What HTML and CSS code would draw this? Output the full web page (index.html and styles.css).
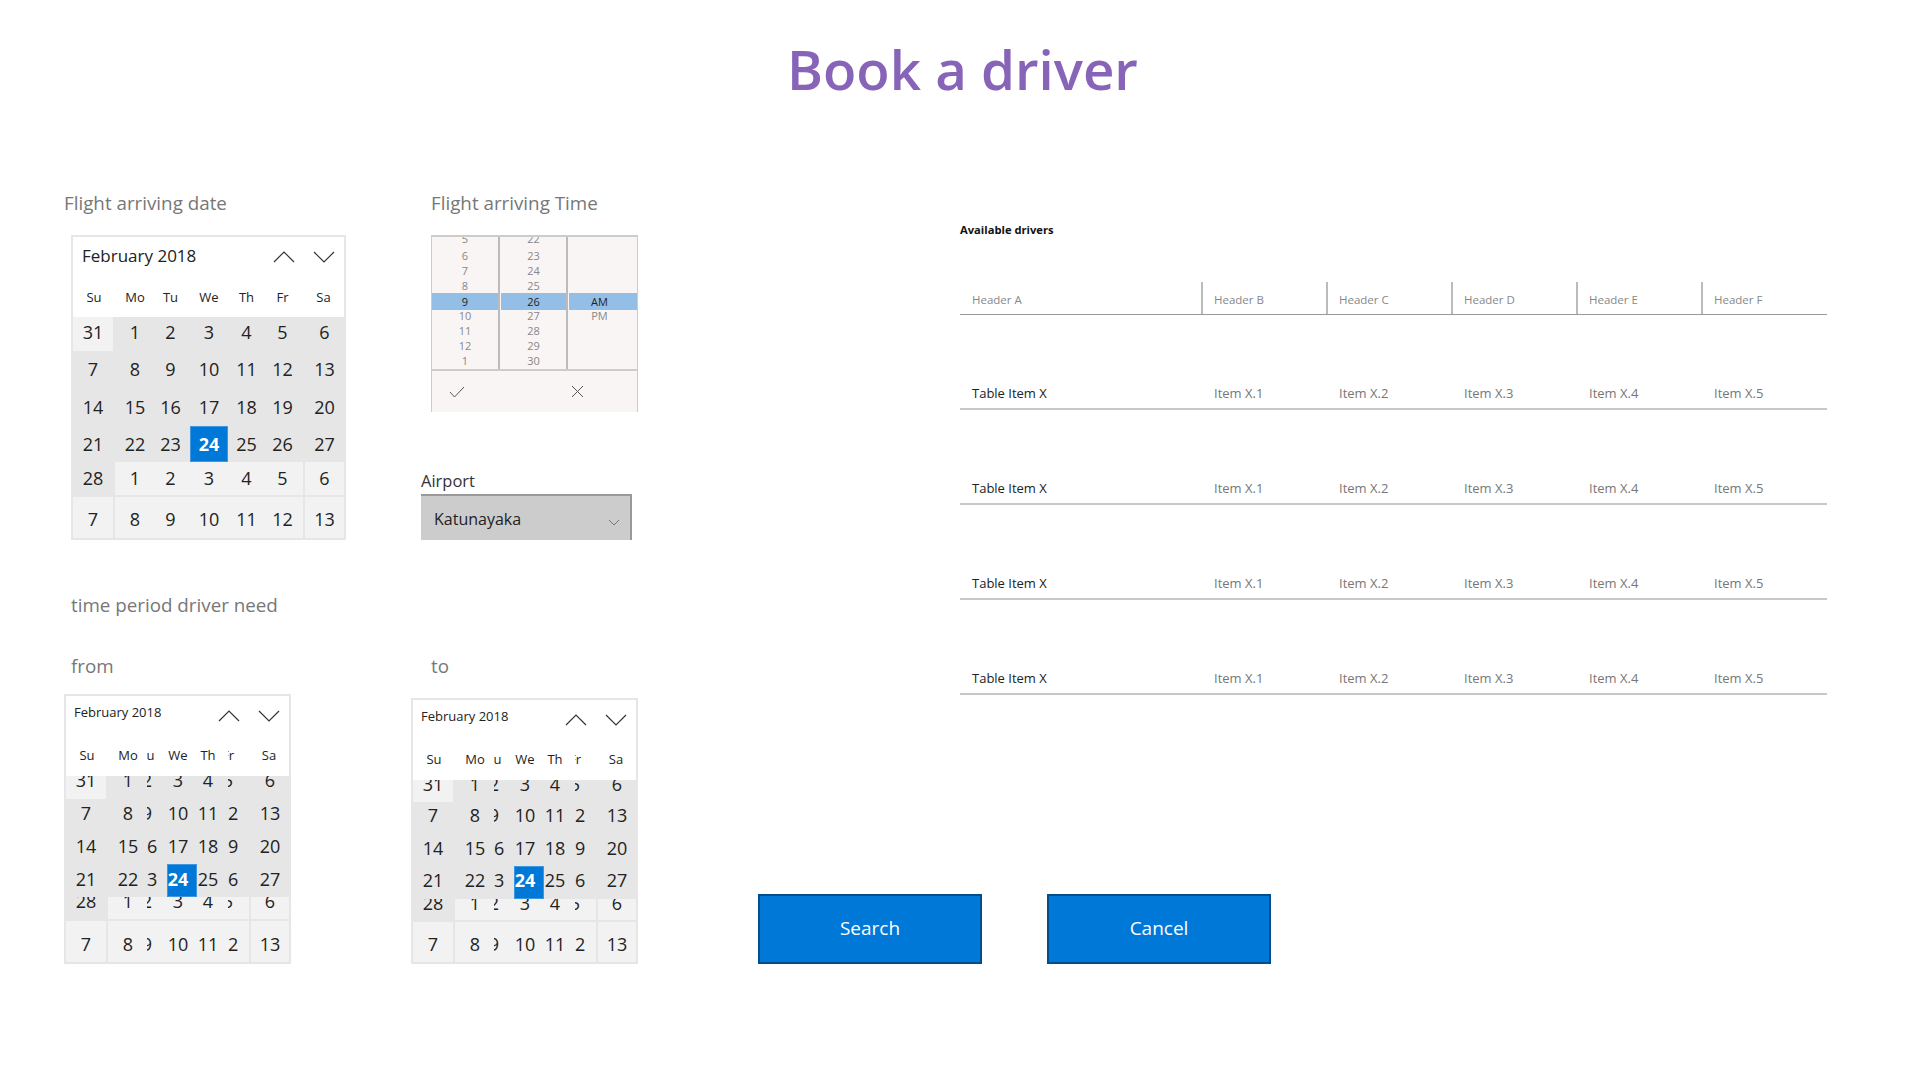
FILE: index.html
```html
<!DOCTYPE html>
<html lang="en">
<head>
  <meta charset="UTF-8" />
  <title>Book a driver</title>
  <link rel="stylesheet" href="styles.css">
</head>
<body>

  <h1 class="page-title">Book a driver</h1>

  <div class="main">

    <!-- Left side: date and time pickers -->
    <div class="forms">
      <div class="forms-top">
        <div class="col-date">
          <div class="label">Flight arriving date</div>
          <div class="cal cal-big">
            <div class="cal-head">
              <span class="cal-month">February 2018</span>
              <svg class="chev" width="22" height="12" viewBox="0 0 22 12"><path d="M1 11 L11 1 L21 11"/></svg>
              <svg class="chev" width="22" height="12" viewBox="0 0 22 12"><path d="M1 1 L11 11 L21 1"/></svg>
            </div>
            <div class="cal-week"><span>Su</span><span>Mo</span><span>Tu</span><span>We</span><span>Th</span><span>Fr</span><span>Sa</span></div>
            <div class="cal-days">
              <span>31</span><span>1</span><span>2</span><span>3</span><span>4</span><span>5</span><span>6</span>
              <span>7</span><span>8</span><span>9</span><span>10</span><span>11</span><span>12</span><span>13</span>
              <span>14</span><span>15</span><span>16</span><span>17</span><span>18</span><span>19</span><span>20</span>
              <span>21</span><span>22</span><span>23</span><span class="today">24</span><span>25</span><span>26</span><span>27</span>
              <span>28</span><span>1</span><span>2</span><span>3</span><span>4</span><span>5</span><span>6</span>
              <span>7</span><span>8</span><span>9</span><span>10</span><span>11</span><span>12</span><span>13</span>
            </div>
          </div>
        </div>

        <div class="col-time">
          <div class="label">Flight arriving Time</div>
          <div class="time-picker">
            <div class="time-cols">
              <div class="time-col">
                <div class="first">5</div><div>6</div><div>7</div><div>8</div><div class="sel">9</div><div class="next">10</div><div>11</div><div>12</div><div>1</div>
              </div>
              <div class="time-col">
                <div class="first">22</div><div>23</div><div>24</div><div>25</div><div class="sel">26</div><div class="next">27</div><div>28</div><div>29</div><div>30</div>
              </div>
              <div class="time-col time-col-ampm">
                <div class="sel">AM</div><div class="next">PM</div>
              </div>
            </div>
            <div class="time-actions">
              <svg width="16" height="12" viewBox="0 0 16 12"><path d="M1 6 L5.5 11 L15 1"/></svg>
              <svg width="13" height="13" viewBox="0 0 13 13"><path d="M1 1 L12 12 M12 1 L1 12"/></svg>
            </div>
          </div>
          <div class="field-label">Airport</div>
          <div class="select">
            <span>Katunayaka</span>
            <svg width="12" height="7" viewBox="0 0 12 7"><path d="M1 1 L6 6 L11 1"/></svg>
          </div>
        </div>
      </div>

      <div class="label period-title">time period driver need</div>

      <div class="forms-bottom">
        <div class="col-from">
          <div class="label">from</div>
          <div class="cal cal-sm cal-from">
            <div class="cal-head">
              <span class="cal-month">February 2018</span>
              <svg class="chev" width="22" height="12" viewBox="0 0 22 12"><path d="M1 11 L11 1 L21 11"/></svg>
              <svg class="chev" width="22" height="12" viewBox="0 0 22 12"><path d="M1 1 L11 11 L21 1"/></svg>
            </div>
            <div class="cal-week"><span>Su</span><span>Mo</span><span>Tu</span><span>We</span><span>Th</span><span>Fr</span><span>Sa</span></div>
            <div class="cal-days">
              <span>31</span><span>1</span><span>2</span><span>3</span><span>4</span><span>5</span><span>6</span>
              <span>7</span><span>8</span><span>9</span><span>10</span><span>11</span><span>12</span><span>13</span>
              <span>14</span><span>15</span><span>16</span><span>17</span><span>18</span><span>19</span><span>20</span>
              <span>21</span><span>22</span><span>23</span><span class="today">24</span><span>25</span><span>26</span><span>27</span>
              <span>28</span><span>1</span><span>2</span><span>3</span><span>4</span><span>5</span><span>6</span>
              <span>7</span><span>8</span><span>9</span><span>10</span><span>11</span><span>12</span><span>13</span>
            </div>
          </div>
        </div>

        <div class="col-to">
          <div class="label">to</div>
          <div class="cal cal-sm cal-to">
            <div class="cal-head">
              <span class="cal-month">February 2018</span>
              <svg class="chev" width="22" height="12" viewBox="0 0 22 12"><path d="M1 11 L11 1 L21 11"/></svg>
              <svg class="chev" width="22" height="12" viewBox="0 0 22 12"><path d="M1 1 L11 11 L21 1"/></svg>
            </div>
            <div class="cal-week"><span>Su</span><span>Mo</span><span>Tu</span><span>We</span><span>Th</span><span>Fr</span><span>Sa</span></div>
            <div class="cal-days">
              <span>31</span><span>1</span><span>2</span><span>3</span><span>4</span><span>5</span><span>6</span>
              <span>7</span><span>8</span><span>9</span><span>10</span><span>11</span><span>12</span><span>13</span>
              <span>14</span><span>15</span><span>16</span><span>17</span><span>18</span><span>19</span><span>20</span>
              <span>21</span><span>22</span><span>23</span><span class="today">24</span><span>25</span><span>26</span><span>27</span>
              <span>28</span><span>1</span><span>2</span><span>3</span><span>4</span><span>5</span><span>6</span>
              <span>7</span><span>8</span><span>9</span><span>10</span><span>11</span><span>12</span><span>13</span>
            </div>
          </div>
        </div>
      </div>
    </div>

    <!-- Right side: drivers table and buttons -->
    <div class="results">
      <div class="drivers">
        <div class="drivers-title">Available drivers</div>
        <div class="t-head">
          <div>Header A</div><div>Header B</div><div>Header C</div><div>Header D</div><div>Header E</div><div>Header F</div>
        </div>
        <div class="t-row">
          <div class="t-main">Table Item X</div><div>Item X.1</div><div>Item X.2</div><div>Item X.3</div><div>Item X.4</div><div>Item X.5</div>
        </div>
        <div class="t-row">
          <div class="t-main">Table Item X</div><div>Item X.1</div><div>Item X.2</div><div>Item X.3</div><div>Item X.4</div><div>Item X.5</div>
        </div>
        <div class="t-row">
          <div class="t-main">Table Item X</div><div>Item X.1</div><div>Item X.2</div><div>Item X.3</div><div>Item X.4</div><div>Item X.5</div>
        </div>
        <div class="t-row">
          <div class="t-main">Table Item X</div><div>Item X.1</div><div>Item X.2</div><div>Item X.3</div><div>Item X.4</div><div>Item X.5</div>
        </div>
      </div>
      <div class="actions">
        <button class="btn">Search</button>
        <button class="btn">Cancel</button>
      </div>
    </div>

  </div>

</body>
</html>
```

FILE: styles.css
```css
* {
  box-sizing: border-box;
  margin: 0;
  padding: 0;
}

body {
  width: 1920px;
  height: 1080px;
  overflow: hidden;
  background-color: #fff;
  font-family: "Open Sans", "Noto Sans", sans-serif;
  color: #222;
}

.page-title {
  height: 190px;
  padding: 31px 0 0 5px;
  text-align: center;
  font-size: 54.6px;
  line-height: 76px;
  font-weight: 600;
  color: #8764b8;
}

.main {
  display: flex;
  padding-left: 64px;
}

.forms {
  width: 574px;
}

.forms-top,
.forms-bottom {
  display: flex;
}

.label {
  font-size: 18.8px;
  line-height: 26px;
  color: #777;
}

.col-date {
  width: 357px;
}

.col-date .cal {
  margin: 19px 0 0 7px;
}

.col-time {
  width: 217px;
}

.col-time > .label {
  margin-left: 10px;
}

/* Calendar */
.cal {
  border: 2px solid #e6e6e6;
  background-color: #e6e6e6;
}

.cal-big {
  width: 275px;
  --tracks: 42px 39px 36px 38px 37px 38px 41px;
  --rows: 34px 37px 38px 36px 35px 41px;
}

.cal-sm {
  width: 227px;
  --tracks: 42px 39px 20px 30px 31px 21px 40px;
}

.cal-from {
  margin-top: 15px;
  --rows: 23px 31px 34px 33px 24px 41px;
}

.cal-to {
  margin-top: 19px;
  --rows: 22px 31px 33px 33px 23px 40px;
}

.cal-head {
  display: flex;
  align-items: center;
  height: 40px;
  padding: 0 9px 0 9px;
  background-color: #fff;
}

.cal-month {
  flex: 1;
  margin-top: -4px;
  font-size: 17px;
}

.cal-sm .cal-head {
  padding-left: 8px;
}

.cal-sm .cal-month {
  margin-top: -8px;
  font-size: 13px;
}

.chev {
  margin-left: 18px;
}

.chev path {
  fill: none;
  stroke: #333;
  stroke-width: 1.2;
}

.cal-week,
.cal-days {
  display: grid;
  grid-template-columns: var(--tracks);
}

.cal-week {
  height: 40px;
  background-color: #fff;
  font-size: 13px;
}

.cal-sm .cal-week {
  padding-bottom: 2px;
}

.cal-days {
  grid-template-rows: var(--rows);
  font-size: 18px;
}

.cal-week span,
.cal-days span {
  display: flex;
  align-items: center;
  justify-content: center;
  overflow: hidden;
}

/* other month days */
.cal-days span:first-child,
.cal-days span:nth-child(n+30) {
  background-color: #f2f2f2;
}

.cal-days span:nth-child(7n+1) {
  margin-right: 2px;
}

.cal-days span:nth-child(7n) {
  margin-left: 2px;
}

.cal-days span:nth-child(n+29):nth-child(-n+35) {
  margin-bottom: 2px;
}

.cal-days .today {
  background-color: #0078d7;
  color: #fff;
  font-weight: 700;
  box-shadow: inset 0 0 0 1px #3f97e0;
}

/* big calendar: columns sit a bit uneven */
.cal-big span:nth-child(7n+2) {
  padding-left: 1px;
}

.cal-big span:nth-child(7n+3),
.cal-big span:nth-child(7n+6) {
  padding-right: 3px;
}

.cal-big .cal-days span:nth-child(-n+7) {
  padding-bottom: 5px;
}

.cal-big .cal-days span:nth-child(n+8):nth-child(-n+14) {
  padding-bottom: 2px;
}

.cal-big .cal-days span:nth-child(n+29):nth-child(-n+35) {
  padding-bottom: 2px;
}

.cal-big .cal-days span:nth-child(n+36) {
  padding-top: 2px;
}

/* small calendars are squeezed, Tu and Fr only show their right half */
.cal-sm span:nth-child(7n+3),
.cal-sm span:nth-child(7n+6) {
  clip-path: inset(0 0 0 50%);
}

.cal-sm span:nth-child(7n+2) {
  padding-left: 1px;
}

.cal-sm span:nth-child(7n+3) {
  margin-left: -20px;
}

.cal-sm span:nth-child(7n+6) {
  margin-left: -21px;
}

.cal-sm span:nth-child(7n+4) {
  padding-right: 8px;
}

.cal-sm span:nth-child(7n+5) {
  padding-right: 9px;
}

.cal-sm .cal-days span:nth-child(-n+7),
.cal-sm .cal-days span:nth-child(n+29):nth-child(-n+35) {
  align-items: flex-start;
  line-height: 9px;
}

.cal-sm .cal-days span:nth-child(n+8):nth-child(-n+14),
.cal-sm .cal-days span:nth-child(n+22):nth-child(-n+28) {
  padding-bottom: 4px;
}

.cal-sm .cal-days span:nth-child(n+15):nth-child(-n+21) {
  padding-bottom: 2px;
}

.cal-sm .cal-days span:nth-child(n+36) {
  padding-top: 4px;
}

.cal-to .cal-days span:nth-child(n+8):nth-child(-n+14) {
  padding-bottom: 6px;
}

.cal-to .cal-days span:nth-child(n+15):nth-child(-n+21) {
  padding-bottom: 4px;
}

.cal-to .cal-days span:nth-child(n+22):nth-child(-n+28) {
  padding-bottom: 6px;
}

/* Time picker */
.time-picker {
  width: 207px;
  height: 177px;
  margin: 19px 0 0 10px;
  border: solid #ccc;
  border-width: 2px 1px 0;
  background-color: #f9f5f5;
}

.time-cols {
  display: flex;
  height: 134px;
  border-bottom: 2px solid #ccc;
}

.time-col {
  width: 68px;
  overflow: hidden;
  border-right: 2px solid #bbb;
  font-size: 11px;
  line-height: 15px;
  text-align: center;
  color: #888;
}

.time-col + .time-col {
  padding-left: 1px;
}

.time-col-ampm {
  flex: 1;
  border-right: 0;
  padding-top: 56px;
}

.time-col-ampm div {
  padding-right: 7px;
}

.time-col .first {
  margin: -6px 0 2px;
}

.time-col .sel {
  height: 17px;
  line-height: 17px;
  background-color: #93bfe6;
  color: #222;
}

.time-col .next {
  margin-top: -2px;
}

.time-actions {
  display: flex;
  align-items: center;
  justify-content: space-between;
  height: 41px;
  padding: 0 53px 0 17px;
}

.time-actions path {
  fill: none;
  stroke: #555;
  stroke-width: 1;
}

.field-label {
  margin: 57px 0 1px;
  font-size: 16.5px;
  line-height: 24px;
  color: #333;
}

.select {
  display: flex;
  align-items: center;
  justify-content: space-between;
  width: 211px;
  height: 46px;
  padding: 2px 10px 0 13px;
  border: solid #999;
  border-width: 2px 2px 0 0;
  background-color: #ccc;
  font-size: 16px;
}

.select svg {
  margin-top: 6px;
}

.select path {
  fill: none;
  stroke: #777;
  stroke-width: 1;
}

.period-title {
  margin: 52px 0 0 7px;
}

.forms-bottom {
  margin-top: 35px;
}

.col-from {
  width: 347px;
}

.col-from .label {
  margin-left: 7px;
}

.col-to .label {
  margin-left: 20px;
}

/* Drivers table */
.results {
  width: 1069px;
  margin-left: 120px;
}

.drivers {
  margin-left: 202px;
  padding-top: 31px;
}

.drivers-title {
  font-size: 11.2px;
  line-height: 18px;
  font-weight: 700;
  color: #111;
}

.t-head,
.t-row {
  display: grid;
  grid-template-columns: 242px repeat(5, 125px);
}

.t-head {
  grid-template-columns: 241px repeat(4, 125px) 126px;
  height: 33px;
  margin-top: 43px;
  border-bottom: 1px solid #999;
  font-size: 11.5px;
  color: #888;
}

.t-head div {
  padding: 9px 0 0 12px;
  line-height: 18px;
}

.t-head div + div {
  padding-left: 11px;
  border-left: 2px solid #bbb;
}

.t-row {
  align-items: end;
  height: 95px;
  padding-bottom: 6px;
  border-bottom: 2px solid #c8c8c8;
  font-size: 13px;
  line-height: 18px;
  color: #777;
}

.t-row div {
  padding-left: 12px;
}

.t-row .t-main {
  color: #222;
}

.actions {
  display: flex;
  gap: 65px;
  margin-top: 199px;
}

.btn {
  width: 224px;
  height: 70px;
  padding-bottom: 3px;
  border: 2px solid #004e8c;
  background-color: #0078d7;
  color: #fff;
  font-family: inherit;
  font-size: 19px;
}
```
